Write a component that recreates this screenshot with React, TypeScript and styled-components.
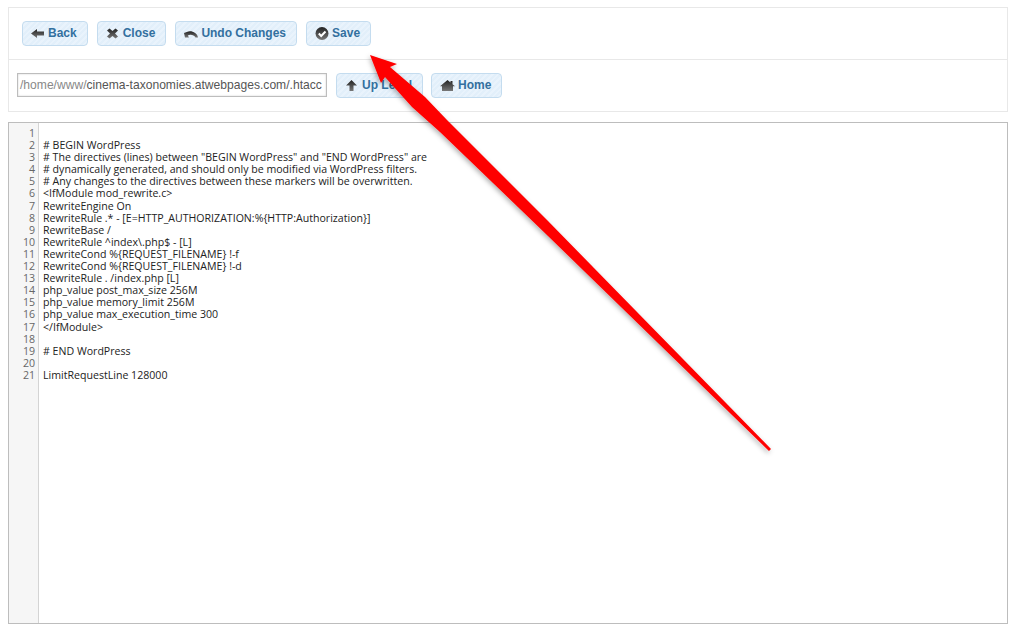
import React from 'react';
import styled, { createGlobalStyle } from 'styled-components';

const GlobalStyle = createGlobalStyle`
  html, body {
    margin: 0;
    padding: 0;
    background: #fff;
  }
`;

const Page = styled.div`
  position: relative;
  width: 1013px;
  height: 631px;
  padding: 7px 5px 0 8px;
  box-sizing: border-box;
  overflow: hidden;
  font-family: "Liberation Sans", Arial, sans-serif;
`;

const Toolbar = styled.div`
  border: 1px solid #e8e8e8;
  height: 105px;
  box-sizing: border-box;
  margin-bottom: 10px;
`;

const Row = styled.div<{ $divided?: boolean }>`
  display: flex;
  align-items: flex-start;
  gap: 9px;
  height: ${p => (p.$divided ? 52 : 51)}px;
  box-sizing: border-box;
  padding: ${p => (p.$divided ? '13px 13px 0' : '13px 8px 0')};
  border-bottom: ${p => (p.$divided ? '1px solid #e8e8e8' : 'none')};
`;

const Button = styled.button<{ $tight?: boolean }>`
  display: inline-flex;
  align-items: center;
  gap: 3px;
  height: 25px;
  margin-left: ${p => (p.$tight ? -1 : 0)}px;
  padding: 0 10px 1px 8px;
  box-sizing: border-box;
  border: 1px solid #c4dcef;
  border-radius: 4px;
  background: repeating-linear-gradient(135deg, #e2effa 0 2px, #e9f3fc 2px 4px);
  color: #33709f;
  font: bold 12px "Liberation Sans", Arial, sans-serif;
`;

const PathField = styled.div`
  width: 310px;
  height: 24px;
  box-sizing: border-box;
  border: 1px solid #bdbdbd;
  box-shadow: inset 0 0 2px #ccc;
  padding: 0 2px;
  font-size: 12.1px;
  line-height: 22px;
  white-space: nowrap;
  color: #555;
`;

const Muted = styled.span`
  color: #888;
`;

const Editor = styled.div`
  display: flex;
  height: 502px;
  box-sizing: border-box;
  border: 1px solid #bdbdbd;
  font-family: "Open Sans", sans-serif;
  font-size: 10.6px;
  line-height: 12.1px;
  color: #222;
`;

const Gutter = styled.div`
  width: 30px;
  box-sizing: border-box;
  background: #f6f6f6;
  border-right: 1px solid #d4d4d4;
  padding: 4px 3px 0 0;
  text-align: right;
  color: #666;
`;

const Code = styled.div`
  flex: 1;
  padding: 4px 0 0 4px;
  white-space: pre;
`;

const Line = styled.div`
  height: 12.1px;
`;

const ArrowLayer = styled.svg`
  position: absolute;
  left: 0;
  top: 0;
  pointer-events: none;
`;

const IconSvg = styled.svg`
  display: block;
  flex: none;
`;

const icons: Record<string, React.ReactNode> = {
  back: <path d="M0 6.5 L6 2 V4.5 H13 V8.5 H6 V11 Z" fill="url(#ig)" />,
  close: <path d="M1 3.5 L3.5 1.5 L6.5 4 L9.5 1.5 L12 3.5 L9 6.5 L12 9.5 L9.5 11.5 L6.5 9 L3.5 11.5 L1 9.5 L4 6.5 Z" fill="url(#ig)" />,
  undo: <path d="M0 6 L1 10.5 L5 10.5 L3.8 8.5 C6.5 7 10 8 11.5 10.5 H14 C13 5.5 7 3 2.8 5 Z" fill="url(#ig)" />,
  save: (
    <>
      <circle cx="7" cy="6.5" r="6.5" fill="url(#ig)" />
      <path d="M3.8 6.5 L6.2 9 L10.5 4.5" fill="none" stroke="#fff" strokeWidth="2" />
    </>
  ),
  up: <path d="M6.5 1 L12 6.5 H8.5 V12 H4.5 V6.5 H1 Z" fill="url(#ig)" />,
  home: <path d="M7.5 1 L10.5 3.5 V2 H12.5 V5.2 L15 7.2 H13 V12 H2 V7.2 H0 Z" fill="url(#ig)" />,
};

const Icon = ({ name, width = 14 }: { name: string; width?: number }) => (
  <IconSvg width={width} height={13} viewBox={`0 0 ${width} 13`}>
    <defs>
      <linearGradient id="ig" x1="0" y1="0" x2="0" y2="1">
        <stop offset="0" stopColor="#222" />
        <stop offset="1" stopColor="#777" />
      </linearGradient>
    </defs>
    {icons[name]}
  </IconSvg>
);

const codeLines = [
  '',
  '# BEGIN WordPress',
  '# The directives (lines) between "BEGIN WordPress" and "END WordPress" are',
  '# dynamically generated, and should only be modified via WordPress filters.',
  '# Any changes to the directives between these markers will be overwritten.',
  '<IfModule mod_rewrite.c>',
  'RewriteEngine On',
  'RewriteRule .* - [E=HTTP_AUTHORIZATION:%{HTTP:Authorization}]',
  'RewriteBase /',
  'RewriteRule ^index\\.php$ - [L]',
  'RewriteCond %{REQUEST_FILENAME} !-f',
  'RewriteCond %{REQUEST_FILENAME} !-d',
  'RewriteRule . /index.php [L]',
  'php_value post_max_size 256M',
  'php_value memory_limit 256M',
  'php_value max_execution_time 300',
  '</IfModule>',
  '',
  '# END WordPress',
  '',
  'LimitRequestLine 128000',
];

const App: React.FC = () => (
  <Page>
    <GlobalStyle />
    <Toolbar>
      <Row $divided>
        <Button><Icon name="back" />Back</Button>
        <Button><Icon name="close" />Close</Button>
        <Button><Icon name="undo" />Undo Changes</Button>
        <Button><Icon name="save" />Save</Button>
      </Row>
      <Row>
        <PathField><Muted>/home/www/</Muted>cinema-taxonomies.atwebpages.com/.htacc</PathField>
        <Button><Icon name="up" />Up Level</Button>
        <Button $tight><Icon name="home" width={15} />Home</Button>
      </Row>
    </Toolbar>
    <Editor>
      <Gutter>
        {codeLines.map((_, i) => <Line key={i}>{i + 1}</Line>)}
      </Gutter>
      <Code>
        {codeLines.map((l, i) => <Line key={i}>{l}</Line>)}
      </Code>
    </Editor>
    <ArrowLayer width={1013} height={631} viewBox="0 0 1013 631">
      <defs>
        <filter id="soft" x="-10%" y="-10%" width="120%" height="120%">
          <feDropShadow dx="-1" dy="2" stdDeviation="2.5" floodColor="#000" floodOpacity="0.32" />
        </filter>
      </defs>
      <path
        d="M370 55 L397 64 L390 67 L425 97 L447 120 L548 221 L771 449 L769 451 L548 236 L440 132 L412 107 L385 77 L381 83 Z"
        fill="#fe0000"
        filter="url(#soft)"
      />
    </ArrowLayer>
  </Page>
);

export default App;
